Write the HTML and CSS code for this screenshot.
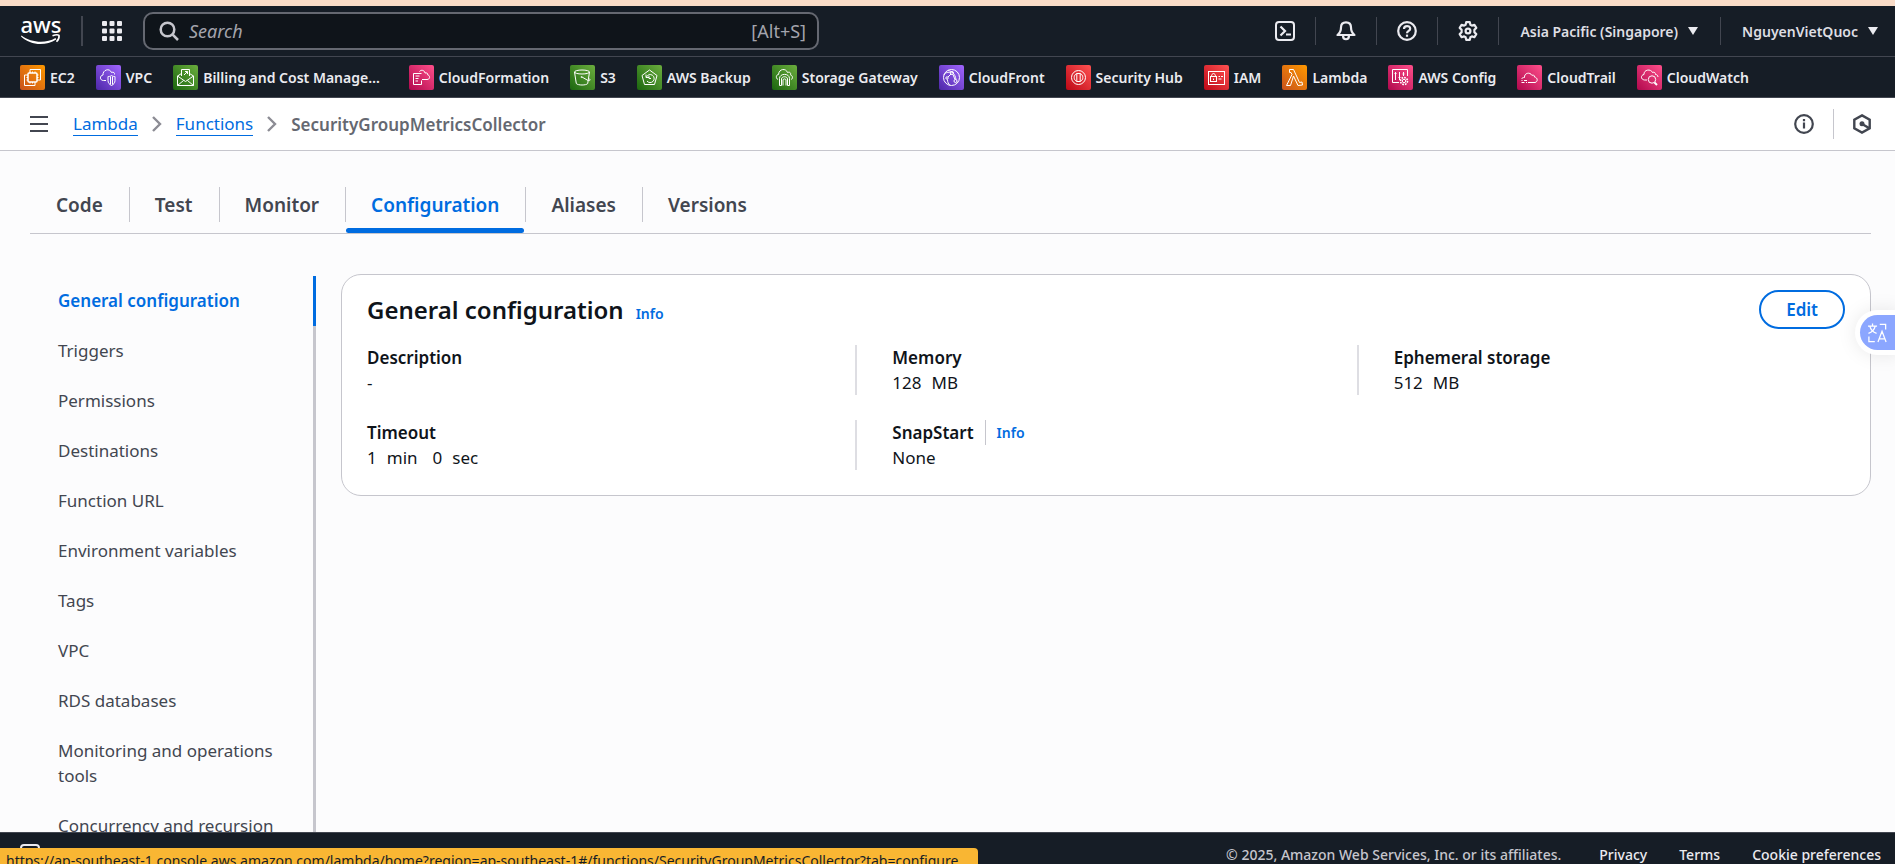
FILE: index.html
```html
<!DOCTYPE html>
<html lang="en">
<head>
<meta charset="utf-8">
<title>SecurityGroupMetricsCollector | Functions | Lambda</title>
<link rel="stylesheet" href="styles.css">
</head>
<body>
<svg class="defs" width="0" height="0" aria-hidden="true">
  <defs>
    <linearGradient id="g-orange" x1="0" y1="1" x2="1" y2="0"><stop offset="0" stop-color="#c8511b"/><stop offset="1" stop-color="#ff9900"/></linearGradient>
    <linearGradient id="g-purple" x1="0" y1="1" x2="1" y2="0"><stop offset="0" stop-color="#4d27a8"/><stop offset="1" stop-color="#a166ff"/></linearGradient>
    <linearGradient id="g-green" x1="0" y1="1" x2="1" y2="0"><stop offset="0" stop-color="#1b660f"/><stop offset="1" stop-color="#6cae3e"/></linearGradient>
    <linearGradient id="g-pink" x1="0" y1="1" x2="1" y2="0"><stop offset="0" stop-color="#b0084d"/><stop offset="1" stop-color="#ff4f8b"/></linearGradient>
    <linearGradient id="g-red" x1="0" y1="1" x2="1" y2="0"><stop offset="0" stop-color="#bd0816"/><stop offset="1" stop-color="#ff5252"/></linearGradient>
  </defs>
</svg>

<header class="topbar">
  <a class="logo" href="#" aria-label="AWS home">
    <svg width="40" height="30" viewBox="0 0 40 30">
      <text class="logo-text" x="20" y="17" text-anchor="middle">aws</text>
      <path d="M.500 19.500c9 7 24 8.500 34 2.500l.8 1.400c-11 7-26 6-35.300-2.900Z" fill="#fff"/>
      <path d="M31.500 19.800c3-1.200 5.500-1.200 6.500-.5.400 1.800-.6 4.500-2.500 6.500" fill="none" stroke="#fff" stroke-width="1.600"/>
    </svg>
  </a>
  <span class="rule logo-rule"></span>
  <button class="icon-btn apps" type="button" aria-label="Services">
    <svg width="20" height="20" viewBox="0 0 20 20" fill="#ebebf0"><rect width="5" height="5" rx="1"/><rect x="7.500" width="5" height="5" rx="1"/><rect x="15" width="5" height="5" rx="1"/><rect y="7.500" width="5" height="5" rx="1"/><rect x="7.500" y="7.500" width="5" height="5" rx="1"/><rect x="15" y="7.500" width="5" height="5" rx="1"/><rect y="15" width="5" height="5" rx="1"/><rect x="7.500" y="15" width="5" height="5" rx="1"/><rect x="15" y="15" width="5" height="5" rx="1"/></svg>
  </button>
  <label class="search">
    <svg width="20" height="20" viewBox="0 0 20 20" fill="none" stroke="#c6c6cd" stroke-width="2.500"><circle cx="8.500" cy="8.500" r="6.800"/><path d="M13.200 13.200 19 19"/></svg>
    <input type="search" placeholder="Search" aria-label="Search">
    <span class="hint">[Alt+S]</span>
  </label>
  <div class="tools">
    <button class="icon-btn" type="button" aria-label="CloudShell"><svg width="20" height="20" viewBox="0 0 20 20" fill="none" stroke="#ebebf0" stroke-width="2"><rect x="1" y="1" width="18" height="18" rx="3"/><path d="m5.500 5.500 4.500 4.500-4.500 4.500" stroke-width="2.200"/><path d="M11 13.500h5"/></svg></button>
    <button class="icon-btn" type="button" aria-label="Notifications"><svg width="20" height="20" viewBox="0 0 20 20" fill="none" stroke="#ebebf0" stroke-width="2.200" stroke-linejoin="round"><path d="M10 1.300c-3.500 0-5 2.500-5 5.200 0 3.500-1 5.500-3.500 7.500h17C16 12 15 10 15 6.500c0-2.700-1.500-5.200-5-5.200Z"/><path d="M7 14.500c0 5 6 5 6 0" /></svg></button>
    <button class="icon-btn" type="button" aria-label="Help"><svg width="20" height="20" viewBox="0 0 20 20" fill="none" stroke="#ebebf0" stroke-width="2.200"><circle cx="10" cy="10" r="8.800"/><path d="M7 8c0-4 6.200-3.800 6.200-.3C13.200 10 10 9.800 10 12.300"/><path d="M10 13.600v2.200"/></svg></button>
    <button class="icon-btn" type="button" aria-label="Settings"><svg width="20" height="20" viewBox="0 0 20 20" fill="none" stroke="#ebebf0" stroke-width="2.200" stroke-linejoin="round"><path d="M8.200 1.200h3.600l.6 2.500 1.500.9 2.500-.8 1.900 3.100-1.900 1.900v2.400l1.900 1.900-1.900 3.100-2.500-.8-1.500.9-.6 2.500H8.200l-.6-2.500-1.500-.9-2.500.8-1.900-3.100 1.900-1.900V8.800L1.700 6.900l1.900-3.100 2.500.8 1.500-.9Z"/><circle cx="10" cy="10" r="2.400"/></svg></button>
    <button class="menu-btn" type="button">Asia Pacific (Singapore)<svg width="10" height="8" viewBox="0 0 10 8"><path d="M0 0h10L5 8Z" fill="#ebebf0"/></svg></button>
    <button class="menu-btn" type="button">NguyenVietQuoc<svg width="10" height="8" viewBox="0 0 10 8"><path d="M0 0h10L5 8Z" fill="#ebebf0"/></svg></button>
  </div>
</header>

<nav class="favorites" aria-label="Favorites">
  <a href="#"><svg class="svc" viewBox="0 0 25 25"><rect width="25" height="25" rx="2" fill="url(#g-orange)"/><path d="M10 8V4.500h10.500V15H17"/><rect x="8" y="8" width="9" height="9" rx="1" stroke-width="1.500"/><path d="M8 10H4.500v10.500H15V17M10 6.500v1.500m2.500-1.500V8M15 6.500V8m2 2h1.500M17 12.500h1.500M6.500 12.500H8M6.500 15H8m2 2v1.500m2.500-1.500v1.500"/></svg>EC2</a>
  <a href="#"><svg class="svc" viewBox="0 0 25 25"><rect width="25" height="25" rx="2" fill="url(#g-purple)"/><path d="M10 15.500H7.500c-4 0-4-5-.5-5.500-.5-5 6.500-7.500 8.500-2.500 2-1 3.500.5 3 2"/><path d="M15.500 10.500c1.500 1 2.500 1 3.500 1v4c0 2.500-1.500 4-3.500 5-2-1-3.500-2.500-3.500-5v-4c1 0 2 0 3.500-1Zm-1 1v8m2-8v8"/></svg>VPC</a>
  <a class="truncated" href="#"><svg class="svc" viewBox="0 0 25 25"><rect width="25" height="25" rx="2" fill="url(#g-green)"/><path d="M8.500 11V4.500h8V11M4.500 11v9.500h16V11l-8 5.500ZM4.500 20.500l6-5m10 5-6-5M4.500 11l4-2.500m12 2.500-4-2.500M11 10l3.500-3.500M12 6.500h2.500V9"/></svg>Billing and Cost Manage…</a>
  <a href="#"><svg class="svc" viewBox="0 0 25 25"><rect width="25" height="25" rx="2" fill="url(#g-pink)"/><path d="M12.500 8.500h-8v11h8v-4M6.500 11h4M6.500 13.500h3M6.500 16h2.500M10.500 6.500c1.500-2 5-1.500 5.500 1.500 2-.5 3 .5 2.800 2 2.500.5 2.500 4.500-.8 4.500h-5"/></svg>CloudFormation</a>
  <a href="#"><svg class="svc" viewBox="0 0 25 25"><rect width="25" height="25" rx="2" fill="url(#g-green)"/><ellipse cx="12" cy="7" rx="7.500" ry="2"/><path d="m4.500 7 1.800 11.500c1.500 2 10 2 11.400 0L19.500 7M12 12l6 3.500c2 .5 3-.5 1-2"/><circle cx="11.500" cy="12" r=".5"/></svg>S3</a>
  <a href="#"><svg class="svc" viewBox="0 0 25 25"><rect width="25" height="25" rx="2" fill="url(#g-green)"/><path d="m12.500 5 7.500 5.500-2.500 9h-10l-2.500-9ZM9 9.500v3h3"/><path d="M9.500 12a4 4 0 1 1 .5 4M14 13.500h-2V11"/></svg>AWS Backup</a>
  <a href="#"><svg class="svc" viewBox="0 0 25 25"><rect width="25" height="25" rx="2" fill="url(#g-green)"/><path d="M6 14.500c-2.500-1-2-5 .5-5C7 3.500 14 3 15.500 7.500c3-1 3.500 1 3 2.500 2.500.5 2.500 4 .5 4.500"/><path d="M7.500 20.500v-7c0-5.500 10-5.500 10 0v7h-2v-6.500c0-3-6-3-6 0v6.500Zm3.500 0V15c0-1.500 3-1.500 3 0v5.500"/></svg>Storage Gateway</a>
  <a href="#"><svg class="svc" viewBox="0 0 25 25"><rect width="25" height="25" rx="2" fill="url(#g-purple)"/><circle cx="12.500" cy="12.500" r="8"/><circle cx="13" cy="8" r="1.500"/><circle cx="8" cy="13" r="1.200"/><circle cx="16.500" cy="16" r="1.500"/><path d="M5 10c2-3 4-3 6.500-2M9 12l3-3M14 9.500l2 5M8.500 14.500c0 3 1 4 2.500 6M9 5.500c4 1 7 3 8 9"/></svg>CloudFront</a>
  <a href="#"><svg class="svc" viewBox="0 0 25 25"><rect width="25" height="25" rx="2" fill="url(#g-red)"/><circle cx="12.500" cy="12.500" r="7"/><path d="M10.800 8.500c-3.500 1.500-3.500 6.500 0 8Zm3.400 0c3.500 1.500 3.500 6.500 0 8ZM10.800 8.500h3.400M10.800 16.500h3.400"/></svg>Security Hub</a>
  <a href="#"><svg class="svc" viewBox="0 0 25 25"><rect width="25" height="25" rx="2" fill="url(#g-red)"/><rect x="4.500" y="6.500" width="16" height="13"/><rect x="6.500" y="11.500" width="6" height="5"/><path d="M7.500 11.500c0-4 4-4 4 0M9.500 13.500v1.500M14.500 11.500h1.500m1 0h2M14.500 14h3"/></svg>IAM</a>
  <a href="#"><svg class="svc" viewBox="0 0 25 25"><rect width="25" height="25" rx="2" fill="url(#g-orange)"/><path d="M7.500 4.500h4L17.500 17.500l2.500-.5.500 3-4.500.5-4.500-9.500L8.500 20.500h-4l5.500-11-1-2H7.500Z"/></svg>Lambda</a>
  <a href="#"><svg class="svc" viewBox="0 0 25 25"><rect width="25" height="25" rx="2" fill="url(#g-pink)"/><path d="M11 17.500H4.500v-13h15V11M7.500 7v8M6.500 8.500h2M11.500 7v8M10.500 12.500h2M15.500 7v4M14.500 9h2"/><circle cx="16" cy="16" r="3.500" stroke-width="1.600" stroke-dasharray="1.700 1"/><circle cx="16" cy="16" r="1.700"/></svg>AWS Config</a>
  <a href="#"><svg class="svc" viewBox="0 0 25 25"><rect width="25" height="25" rx="2" fill="url(#g-pink)"/><path d="M11 17.500h7c3-.5 3-5-.5-5.500 0-2-1.500-2.500-2.500-1.500-2-4-8-2.500-7.500 2-1.500 0-2.500.5-3 1.500M4.500 15.500h1m1.500 0h3M4.500 17.500h3m1.500 0h1"/></svg>CloudTrail</a>
  <a href="#"><svg class="svc" viewBox="0 0 25 25"><rect width="25" height="25" rx="2" fill="url(#g-pink)"/><path d="M10 15H7.500c-4-.5-4-5-.5-5.500-.5-5 7-6 8.500-2 2-1 3 .5 3 2 1.500 0 2.500 1 2.500 2.500"/><circle cx="15" cy="14.500" r="3.700"/><path d="m17.500 17.500 2.500 2.500" stroke-width="2"/></svg>CloudWatch</a>
</nav>

<div class="crumbbar">
  <button class="icon-btn" type="button" aria-label="Open navigation"><svg width="18" height="16" viewBox="0 0 18 16" fill="#424650"><path d="M0 0h18v2H0zM0 7h18v2H0zM0 14h18v2H0z"/></svg></button>
  <nav class="crumbs" aria-label="Breadcrumbs">
    <a href="#">Lambda</a>
    <svg width="10" height="16" viewBox="0 0 10 16" fill="none" stroke="#8c8c94" stroke-width="2.400"><path d="m1 1 7 7-7 7"/></svg>
    <a href="#">Functions</a>
    <svg width="10" height="16" viewBox="0 0 10 16" fill="none" stroke="#8c8c94" stroke-width="2.400"><path d="m1 1 7 7-7 7"/></svg>
    <span>SecurityGroupMetricsCollector</span>
  </nav>
  <button class="icon-btn" type="button" aria-label="Info"><svg width="20" height="20" viewBox="0 0 20 20" fill="none" stroke="#424650" stroke-width="2.200"><circle cx="10" cy="10" r="8.800"/><path d="M10 8.500v6M10 5v2.200" /></svg></button>
  <span class="rule light"></span>
  <button class="icon-btn hex" type="button" aria-label="Assistant"><svg width="18" height="20" viewBox="0 0 18 20" fill="none" stroke="#424650" stroke-width="2.400"><path d="m9 1.400 7.700 4.400v8.400L9 18.600l-7.700-4.400V5.800Z"/><circle cx="9" cy="9.800" r="2.500" fill="#424650" stroke="none"/><path d="m9 10 7 4"/></svg></button>
</div>

<main class="content">
  <div class="tabs" role="tablist">
    <button type="button" role="tab">Code</button>
    <button type="button" role="tab">Test</button>
    <button type="button" role="tab">Monitor</button>
    <button type="button" role="tab" aria-selected="true">Configuration</button>
    <button type="button" role="tab">Aliases</button>
    <button type="button" role="tab">Versions</button>
  </div>
  <div class="split">
    <nav class="sidenav" aria-label="Configuration sections">
      <a class="active" href="#">General configuration</a>
      <a href="#">Triggers</a>
      <a href="#">Permissions</a>
      <a href="#">Destinations</a>
      <a href="#">Function URL</a>
      <a href="#">Environment variables</a>
      <a href="#">Tags</a>
      <a href="#">VPC</a>
      <a href="#">RDS databases</a>
      <a href="#">Monitoring and operations tools</a>
      <a href="#">Concurrency and recursion detection</a>
    </nav>
    <section class="card">
      <div class="card-head">
        <h2>General configuration</h2>
        <a class="info" href="#">Info</a>
        <button class="edit" type="button">Edit</button>
      </div>
      <dl class="fields">
        <div><dt>Description</dt><dd>-</dd></div>
        <div><dt>Memory</dt><dd><span>128</span><span>MB</span></dd></div>
        <div><dt>Ephemeral storage</dt><dd><span>512</span><span>MB</span></dd></div>
        <div><dt>Timeout</dt><dd><span>1</span><span class="unit">min</span><span>0</span><span>sec</span></dd></div>
        <div><dt>SnapStart<a class="info ruled" href="#">Info</a></dt><dd>None</dd></div>
      </dl>
    </section>
  </div>
</main>

<footer class="footer">
  <button class="icon-btn" type="button" aria-label="CloudShell"><svg width="20" height="20" viewBox="0 0 20 20" fill="none" stroke="#ebebf0" stroke-width="2"><rect x="1" y="1" width="18" height="18" rx="3"/><path d="m5.500 5.500 4.500 4.500-4.500 4.500M11 13.500h5"/></svg></button>
  <span class="copy">© 2025, Amazon Web Services, Inc. or its affiliates.</span>
  <a href="#">Privacy</a>
  <a href="#">Terms</a>
  <a href="#">Cookie preferences</a>
</footer>

<button class="translate" type="button" aria-label="Translate">
  <svg width="19" height="20" viewBox="0 0 21 21" fill="none" stroke="#fff" stroke-width="1.400"><path d="M5 0v3M0 3h10M8 3c-1 4-4 7-7.500 8M2 3c1 4 4 7 7.500 8M13 1h6.500v5.500M1 14.500V20h6.500M11 20.500l4.500-12 4.500 12M12.500 17h6"/></svg>
</button>
<div class="status">https://ap-southeast-1.console.aws.amazon.com/lambda/home?region=ap-southeast-1#/functions/SecurityGroupMetricsCollector?tab=configure</div>
</body>
</html>
```
FILE: styles.css
```css
* { box-sizing: border-box; }
body {
  margin: 0;
  height: 100vh;
  display: flex;
  flex-direction: column;
  overflow: hidden;
  border-top: 6px solid #f9dcc8;
  background: #fcfcfd;
  color: #0f141a;
  font: 17px/25px "Noto Sans", "Open Sans", sans-serif;
}
a { color: inherit; text-decoration: none; }
button { font: inherit; color: inherit; background: none; border: 0; padding: 0; cursor: pointer; }
svg { display: block; flex: none; }
.defs { position: absolute; }
.icon-btn { flex: none; }
.rule { flex: none; width: 1px; height: 30px; background: #424650; }
.rule.light { background: #c6c6cd; }

.topbar {
  flex: none;
  height: 51px;
  display: flex;
  align-items: center;
  padding: 0 17px 0 21px;
  background: #161d26;
  border-bottom: 1px solid #424650;
}
.logo svg { overflow: visible; }
.logo-text { font: 500 22px "Noto Sans", sans-serif; fill: #fff; }
.logo-rule { width: 2px; margin: 0 19px 0 20px; }
.search {
  width: 676px;
  height: 38px;
  margin-left: 21px;
  padding: 0 11px 0 14px;
  display: flex;
  align-items: center;
  gap: 10px;
  background: #0f141a;
  border: 2px solid #656871;
  border-radius: 10px;
  color: #a4a4ad;
  font-size: 18px;
}
.search input {
  flex: 1;
  min-width: 0;
  padding: 0;
  border: 0;
  outline: 0;
  background: none;
  color: #fff;
  font: inherit;
}
.search input::placeholder { color: #a4a4ad; font-style: italic; opacity: 1; }
.tools { margin-left: auto; display: flex; align-items: center; color: #dedee3; }
.tools > * + * { border-left: 1px solid #424650; }
.tools .icon-btn { height: 28px; padding: 0 20px; display: flex; align-items: center; }
.menu-btn {
  height: 28px;
  padding: 0 22px 0 21px;
  display: flex;
  align-items: center;
  gap: 10px;
  font-size: 14px;
  font-weight: 600;
}
.menu-btn:last-child { padding-right: 0; }

.favorites {
  flex: none;
  height: 41px;
  padding: 0 20px;
  display: flex;
  align-items: center;
  gap: 21px;
  background: #161d26;
  border-bottom: 1px solid #424650;
  color: #ebebf0;
  font-size: 14px;
  font-weight: 600;
  white-space: nowrap;
}
.favorites a { display: flex; align-items: center; gap: 5px; }
.favorites .truncated { margin-right: 8px; }
.svc { width: 25px; height: 25px; fill: none; stroke: #fff; stroke-width: 1; }
.svc > rect:first-child { stroke: none; }

.crumbbar {
  flex: none;
  height: 53px;
  display: flex;
  align-items: center;
  gap: 19px;
  padding: 0 24px 0 30px;
  background: #fff;
  border-bottom: 1px solid #c6c6cd;
}
.crumbs { flex: 1; margin-left: 6px; display: flex; align-items: center; gap: 14px; }
.crumbs a { color: #006ce0; line-height: 22px; border-bottom: 1px solid #006ce0; }
.crumbs span { color: #656871; font-weight: 600; }

.content { flex: 1; min-height: 0; overflow: hidden; padding: 36px 24px 0 30px; }
.tabs { display: flex; border-bottom: 1px solid #c6c6cd; }
.tabs button {
  position: relative;
  padding: 5px 26px 15px;
  line-height: 26px;
  font-size: 19px;
  font-weight: 600;
  color: #424650;
}
.tabs button + button::before {
  content: "";
  position: absolute;
  left: 0;
  top: 0;
  height: 35px;
  border-left: 1px solid #c6c6cd;
}
.tabs [aria-selected="true"] { color: #006ce0; }
.tabs [aria-selected="true"]::after {
  content: "";
  position: absolute;
  left: 1px;
  right: 1px;
  bottom: 0;
  height: 5px;
  border-radius: 3px;
  background: #006ce0;
}

.split { display: flex; gap: 25px; align-items: flex-start; padding-top: 40px; }
.sidenav { flex: none; width: 286px; margin-top: 2px; }
.sidenav a {
  display: block;
  padding: 12px 20px 13px 28px;
  border-right: 3px solid #c6c6cd;
  color: #424650;
}
.sidenav .active { color: #006ce0; font-weight: 600; border-color: #006ce0; }

.card {
  flex: 1;
  padding: 15px 25px 25px;
  background: #fff;
  border: 1px solid #c6c6cd;
  border-radius: 20px;
}
.card-head { display: flex; align-items: baseline; gap: 12px; }
h2 { margin: 0; font-size: 24px; line-height: 39px; font-weight: 600; }
.info { color: #006ce0; font-size: 14px; font-weight: 600; }
.edit {
  align-self: flex-start;
  margin-left: auto;
  height: 39px;
  padding: 0 25px;
  border: 2px solid #006ce0;
  border-radius: 20px;
  color: #006ce0;
  font-weight: 600;
}
.fields {
  margin: 16px -13px 0;
  display: grid;
  grid-template-columns: repeat(3, 1fr);
  row-gap: 25px;
}
.fields > div { padding-left: 35px; border-left: 2px solid #dedee3; }
.fields > div:nth-child(3n + 1) { padding-left: 13px; border-left: 0; }
dt { display: flex; font-weight: 600; }
dd { margin: 0; display: flex; gap: 10px; }
.unit { margin-right: 5px; }
.ruled { margin-left: 11px; padding-left: 11px; border-left: 1px solid #c6c6cd; }

.footer {
  flex: none;
  height: 32px;
  padding: 9px 14px 0 20px;
  display: flex;
  align-items: flex-start;
  gap: 32px;
  overflow: hidden;
  background: #161d26;
  border-top: 1px solid #424650;
  color: #ebebf0;
  font-size: 14px;
  font-weight: 500;
}
.footer .icon-btn { padding-top: 2px; }
.copy { margin-left: auto; margin-right: 6px; color: #c6c6cd; }

.translate {
  position: fixed;
  right: 0;
  top: 315px;
  width: 35px;
  height: 35px;
  padding-left: 8px;
  background: #8ba6ff;
  border-radius: 18px 0 0 18px;
  box-shadow: 0 0 0 5px #fff, 0 0 20px 4px #0000001a;
}
.status {
  position: fixed;
  left: 0;
  bottom: 0;
  height: 16px;
  padding: 0 20px 0 6px;
  overflow: hidden;
  background: #f9b633;
  border-top-right-radius: 4px;
  color: #161d26;
  font-size: 14px;
  white-space: nowrap;
}
```
